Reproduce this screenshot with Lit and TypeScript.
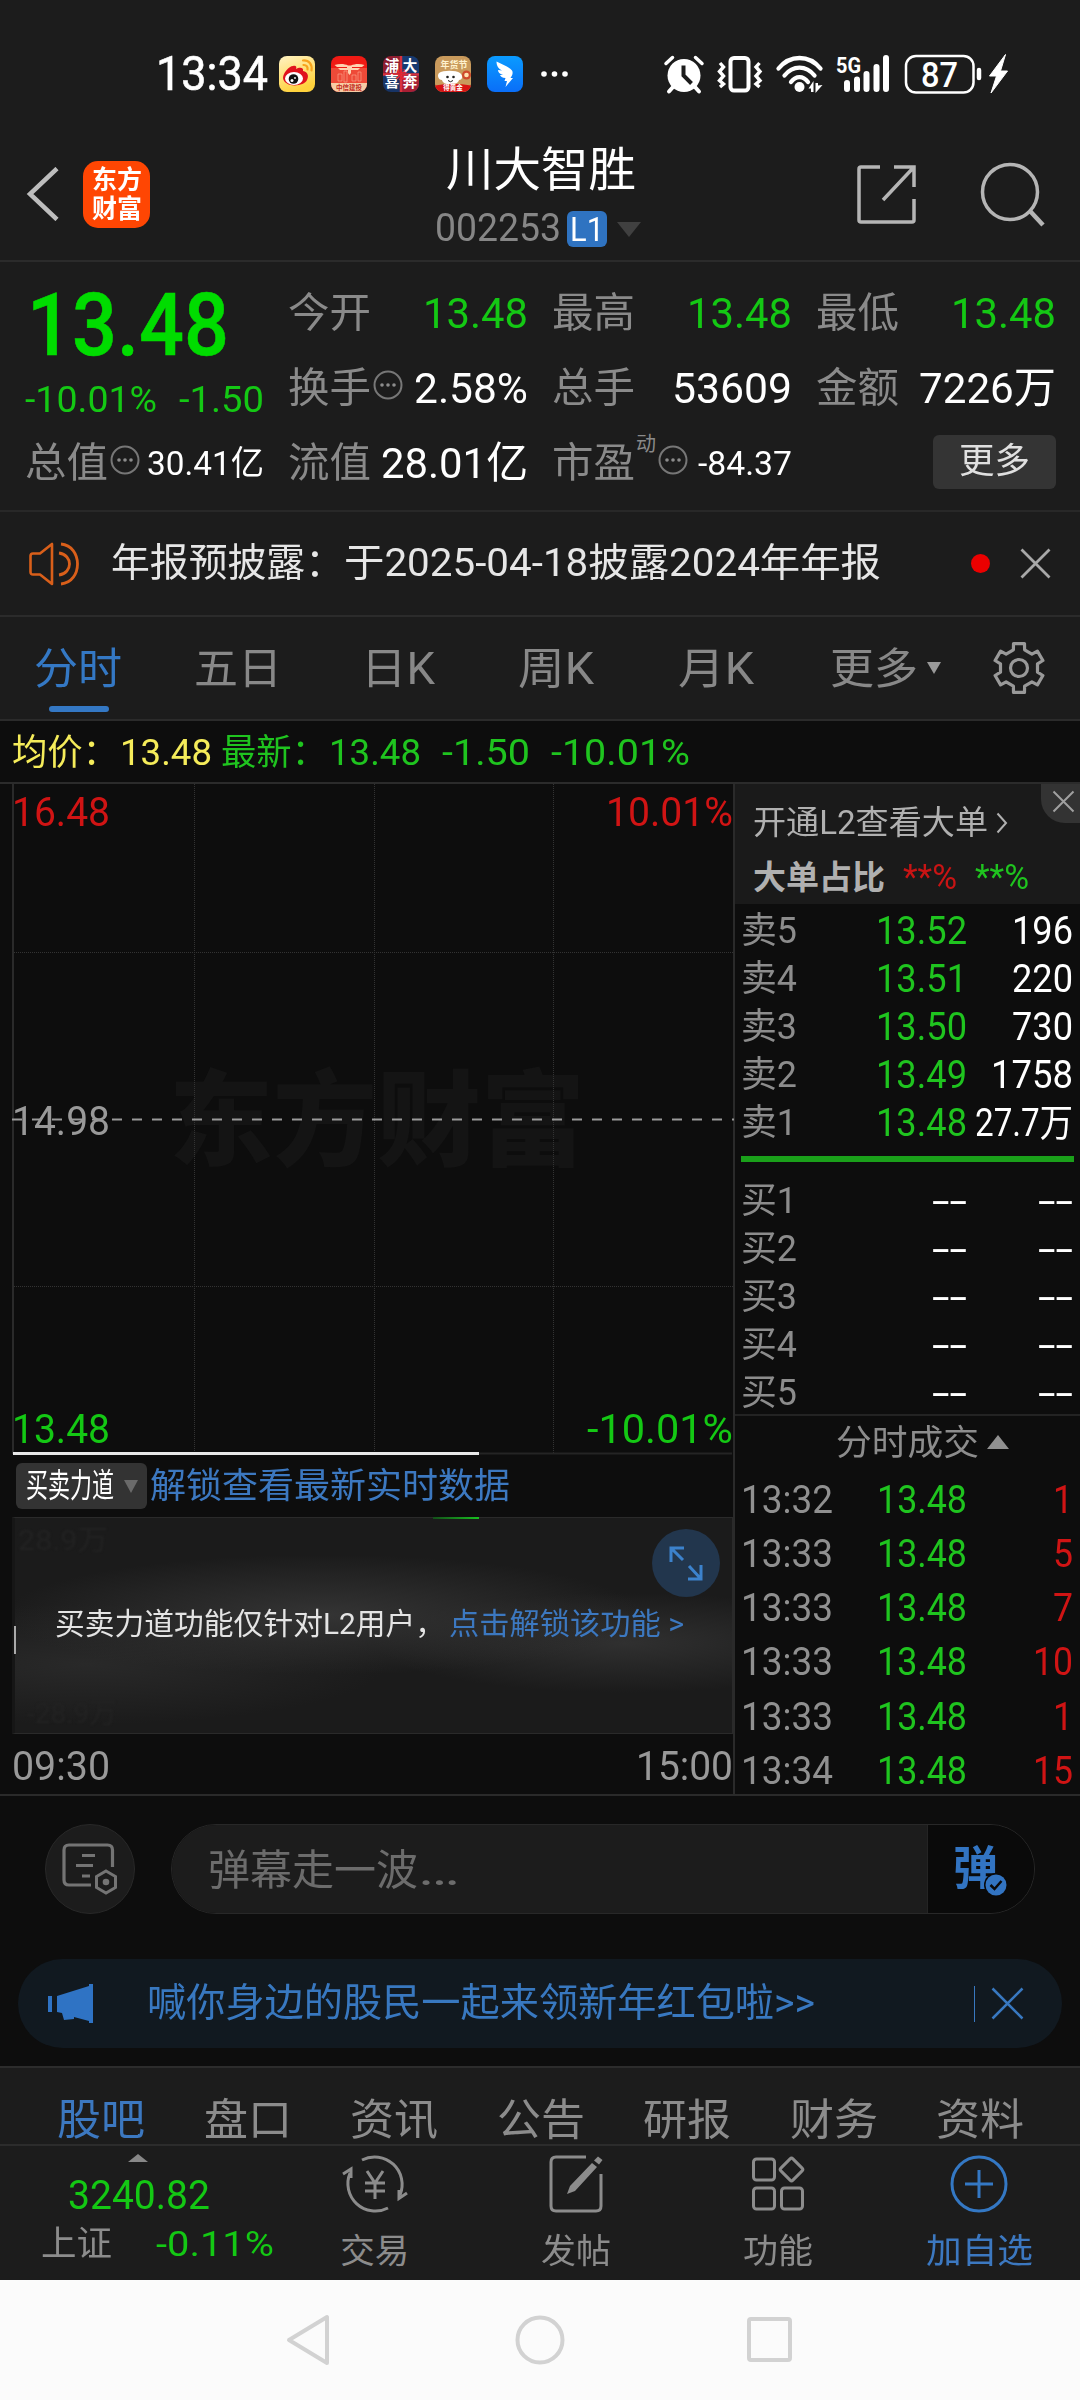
import { LitElement, html, css, svg } from "lit";
import { customElement, property, query } from "lit/decorators.js";

/** Text squeezed or stretched horizontally to an exact advance width. */
@customElement("fit-text")
class FitText extends LitElement {
  @property({ type: Number }) w = 100;
  @query("span") inner!: HTMLElement;
  static styles = css`
    :host { display: block; flex: none; white-space: pre; line-height: 1.2; }
    span { display: inline-block; transform-origin: 0 50%; vertical-align: top; }
  `;
  updated() {
    this.style.width = `${this.w}px`;
    this.inner.style.transform = "none";
    const natural = this.inner.getBoundingClientRect().width;
    if (natural > 0) this.inner.style.transform = `scaleX(${this.w / natural})`;
  }
  render() {
    return html`<span><slot></slot></span>`;
  }
}

const fit = (text: string, w: number, cls = "") => html`<fit-text class=${cls} .w=${w}>${text}</fit-text>`;

const icon = (w: number, h: number, body: unknown, cls = "") =>
  html`<svg class="ic ${cls}" width=${w} height=${h} viewBox="0 0 ${w} ${h}" fill="none">${body}</svg>`;

const more = icon(30, 30, svg`<circle cx="15" cy="15" r="13.5" stroke="#777" stroke-width="2"/>
  <circle cx="9" cy="15" r="1.8" fill="#8c8c8c"/><circle cx="15" cy="15" r="1.8" fill="#8c8c8c"/><circle cx="21" cy="15" r="1.8" fill="#8c8c8c"/>`);

const cross = (s: number, color: string, sw = 2.5, cls = "") =>
  icon(s, s, svg`<path d="M1.5 1.5L${s - 1.5} ${s - 1.5}M${s - 1.5} 1.5L1.5 ${s - 1.5}" stroke=${color} stroke-width=${sw}/>`, cls);

@customElement("status-bar")
class StatusBar extends LitElement {
  static styles = css`
    :host { display: flex; align-items: center; height: 148px; padding: 0 71px 0 156px; box-sizing: border-box; color: #fff; }
    .time { font-size: 48px; font-weight: 400; -webkit-text-stroke: 0.6px #fff; }
    .apps { display: flex; gap: 16px; margin-left: 11px; }
    .ic { display: block; flex: none; overflow: visible; }
    .dots { margin-left: 18px; }
    .sys { display: flex; align-items: center; margin-left: auto; }
    .vib { margin-left: 13px; } .wifi { margin-left: 13px; } .sig { margin-left: 13px; } .bat { margin-left: 13px; } .bolt { margin-left: 7px; }
    text { font-family: Roboto, "Noto Sans CJK SC", sans-serif; font-weight: 700; }
    .lvl { font-weight: 500; }
  `;
  render() {
    return html`
      ${fit("13:34", 112, "time")}
      <div class="apps">
        ${icon(36, 36, svg`<defs><linearGradient id="wb" x1="0" y1="0" x2="0.4" y2="1"><stop stop-color="#fff3c4"/><stop offset="1" stop-color="#ffd23c"/></linearGradient></defs>
          <rect width="36" height="36" rx="8" fill="url(#wb)"/>
          <path d="M4 22C4 17 10 10 14 10C17 9 18 11 17 13C20 11 25 11 24 15C29 16 30 20 28 24C25 31 5 32 4 22Z" fill="#e0121c"/>
          <ellipse cx="15" cy="22.5" rx="9" ry="6.5" fill="#fff"/><circle cx="14.5" cy="23" r="4.8" fill="#111"/><circle cx="13" cy="24.5" r="1.5" fill="#fff"/><circle cx="16" cy="22" r="0.9" fill="#fff"/>
          <path d="M24 4.500C30 4 33.500 8.500 32.500 14.500M24.500 9C27.500 8.800 29 11 28.500 13.500" stroke="#f8a31c" stroke-width="2.200" stroke-linecap="round"/>`)}
        ${icon(36, 36, svg`<rect width="36" height="36" rx="8" fill="#f01a14"/><path d="M0 12H36V28H0Z" fill="#ee4a38"/>
          <path d="M7 18h4v7H7zM13 15h3v11h-3zM21 19h4v6h-4zM27 16h3v9h-3z" stroke="#ffb49a" stroke-width="0.800" opacity="0.700"/>
          <path d="M3.500 9C9 7.500 14 8 17 9.500H20C24 7.500 29 7.500 33.500 9L31 11H21V12H29L27 14H20V17L18.500 19L17 17V14H9L7 12H16V11H6Z" fill="#ffd3b0"/>
          <path d="M0 27H36V28A8 8 0 0 1 28 36H8A8 8 0 0 1 0 28Z" fill="#f7cda6"/>
          <text x="18" y="33.800" font-size="6.500" text-anchor="middle" fill="#c2281c">中信建投</text>`)}
        ${icon(36, 36, svg`<defs><clipPath id="pq"><rect width="36" height="36" rx="8"/></clipPath></defs>
          <g clip-path="url(#pq)"><rect width="18" height="18" fill="#8d1d30"/><rect x="18" width="18" height="36" fill="#163a72"/><rect y="18" width="18" height="18" fill="#173466"/>
          <rect x="18" y="20" width="18" height="16" fill="#a81f34"/><path d="M18 0V36M0 18.500H36" stroke="#d8323e" stroke-width="2.500"/></g>
          <g fill="#fff" font-size="14.500" text-anchor="middle"><text x="9" y="14.500">浦</text><text x="27" y="14.500">大</text><text x="9" y="31">喜</text><text x="27" y="31">奔</text></g>
          <text x="18" y="22.500" font-size="11" text-anchor="middle" fill="#e0242f">发</text>`)}
        ${icon(36, 36, svg`<rect width="36" height="36" rx="8" fill="#c99a5c"/>
          <text x="19" y="12" font-size="9" text-anchor="middle" fill="#fff2cf">年货节</text>
          <circle cx="31.500" cy="19" r="4.500" fill="#cf4a2c"/><circle cx="31.500" cy="19" r="2.300" fill="#ffe1b0"/>
          <path d="M4 17C8 14 21 14 25 17C28 19 28 24 24 24C23 30 8 30 7 24C3 24 2 19 4 17Z" fill="#fff"/>
          <circle cx="12.500" cy="21" r="1.300" fill="#222"/><circle cx="18.500" cy="21" r="1.300" fill="#222"/><path d="M13 24.500Q15.500 27 18 24.500" stroke="#222"/>
          <path d="M0 29.500Q18 26 36 29.500A8 8 0 0 1 28 36H8A8 8 0 0 1 0 29.500Z" fill="#d81414"/>
          <text x="18" y="34" font-size="6.500" text-anchor="middle" fill="#fff">得黄金</text>`)}
        ${icon(36, 36, svg`<defs><linearGradient id="dd" x1="0" y1="0" x2="0" y2="1"><stop stop-color="#0a9bff"/><stop offset="1" stop-color="#0a6ef8"/></linearGradient></defs>
          <rect width="36" height="36" rx="8" fill="url(#dd)"/>
          <path d="M9.500 5.500C14 8 22 10.500 25 14.500C26.500 17 25 20 23.500 22H26L18.500 31L20 25H17.500L18.500 22C15 22 13.500 20.500 13 19L16 19C12.500 18 11 16 11 14L15 14.500C11.500 12.500 9.500 10 9.500 5.500Z" fill="#fff"/>`)}
      </div>
      ${icon(28, 6, svg`<circle cx="3" cy="3" r="2.800" fill="#fff"/><circle cx="13.500" cy="3" r="2.800" fill="#fff"/><circle cx="24" cy="3" r="2.800" fill="#fff"/>`, "dots")}
      <div class="sys">
        ${icon(40, 38, svg`<circle cx="20" cy="20.500" r="16.500" fill="#fff"/><path d="M9 32L5 36.500M31 32L35 36.500" stroke="#fff" stroke-width="4" stroke-linecap="round"/>
          <path d="M2 8.500L8.500 2.500M38 8.500L31.500 2.500" stroke="#fff" stroke-width="3.500" stroke-linecap="round"/><path d="M19.500 10.500V20.500L27.500 28.500" stroke="#1c1c1c" stroke-width="4"/>`)}
        ${icon(46, 38, svg`<rect x="13.500" y="3" width="18" height="32.500" rx="3.500" stroke="#fff" stroke-width="4"/>
          <path d="M3 8L6.500 12L2.500 16.500L6.500 21L2.500 25.500L6.500 29L3 32M42.500 8L39 12L43 16.500L39 21L43 25.500L39 29L42.500 32" stroke="#fff" stroke-width="3.400"/>`, "vib")}
        ${icon(48, 38, svg`<path d="M2.500 13.500C14 -0.500 33 -0.500 44.500 13.500M8.500 20.500C17 10 30 10 38.500 20.500M15 27C20 20.500 27 20.500 32 27" stroke="#fff" stroke-width="4.300" stroke-linecap="round"/>
          <circle cx="23.500" cy="32" r="5" fill="#fff"/><path d="M32.500 33.500L37.500 26V37H35V33.500ZM39.500 28H42V30.500L46.500 30L39.500 38Z" fill="#fff"/>`, "wifi")}
        ${icon(54, 40, svg`<text x="-1" y="19" font-size="22" textLength="25" lengthAdjust="spacingAndGlyphs" fill="#fff">5G</text>
          <path d="M10 29V35M20 25.500V35M29.500 20V35M39.500 13V35M49 4V35" stroke="#fff" stroke-width="6" stroke-linecap="round"/>`, "sig")}
        ${icon(78, 40, svg`<rect x="2" y="2" width="67.500" height="36.500" rx="10" stroke="#fff" stroke-width="2.500"/><path d="M75 16V24" stroke="#fff" stroke-width="4.500" stroke-linecap="round"/>
          <text class="lvl" x="17" y="32.500" font-size="34.500" textLength="37" lengthAdjust="spacingAndGlyphs" fill="#fff">87</text>`, "bat")}
        ${icon(20, 40, svg`<path d="M16.500 0.500L0.500 22H7.500L2 39L18.500 17H11.500Z" fill="#fff" stroke="#fff"/>`, "bolt")}
      </div>`;
  }
}

@customElement("title-bar")
class TitleBar extends LitElement {
  static styles = css`
    :host { display: flex; align-items: flex-start; height: 114px; box-sizing: border-box; border-bottom: 2px solid #2b2b2b; padding: 0 34px 0 26px; }
    .ic { display: block; flex: none; }
    .back { margin-top: 19px; }
    .logo { width: 67px; height: 67px; border-radius: 15px; background: #ff4603; color: #fff; margin: 13px 0 0 23px; display: flex; flex-direction: column; justify-content: center; gap: 3px; align-items: center; font-weight: 700; font-size: 26px; }
    .logo fit-text { line-height: 26px; }
    .mid { flex: 1; display: flex; flex-direction: column; margin-left: 285px; }
    .name { font-size: 47px; color: #fff; line-height: 50px; margin: -3px 0 0 11px; }
    .sub { display: flex; align-items: center; margin-top: 16px; height: 36px; color: #868686; }
    .code { font-size: 38px; }
    .lv { width: 40px; height: 36px; border-radius: 6px; background: #2f73c1; color: #fff; font-size: 34px; display: flex; justify-content: center; align-items: center; margin: 0 10px 0 6px; }
    .share { margin: 16px 63px 0 0; } .search { margin-top: 14px; }
  `;
  render() {
    return html`
      ${icon(34, 54, svg`<path d="M31 1.500L4 27L31 52.500" stroke="#bdbdbd" stroke-width="4.500"/>`, "back")}
      <div class="logo">${fit("东方", 50)}${fit("财富", 50)}</div>
      <div class="mid">
        ${fit("川大智胜", 190, "name")}
        <div class="sub">${fit("002253", 126, "code")}<div class="lv">${fit("L1", 34)}</div>${icon(24, 15, svg`<path d="M0 0H24L12 15Z" fill="#404040"/>`)}</div>
      </div>
      ${icon(60, 60, svg`<path d="M23 3H4Q2 3 2 5V56Q2 58 4 58H55Q57 58 57 56V35M37 3H57V23M57 3L26 36" stroke="#b5b5b5" stroke-width="3.500"/>`, "share")}
      ${icon(66, 66, svg`<circle cx="30" cy="30" r="27.500" stroke="#b5b5b5" stroke-width="3.500"/><path d="M50 49L63 63" stroke="#b5b5b5" stroke-width="4.500"/>`, "search")}`;
  }
}

@customElement("quote-panel")
class QuotePanel extends LitElement {
  static styles = css`
    :host { display: grid; grid-template-columns: 239px 240px 240px 240px; grid-template-rows: 75px 75px 75px; column-gap: 24px; height: 250px; box-sizing: border-box; padding: 14px 24px 0 25px; border-bottom: 2px solid #282828; color: #fff; font-size: 43px; }
    .ic { display: block; flex: none; }
    .lead { grid-row: 1 / 3; display: flex; flex-direction: column; }
    .price { font-size: 88px; font-weight: 500; color: #00dc00; line-height: 94px; margin: 2px 0 0 2px; -webkit-text-stroke: 0.6px #00dc00; }
    .chg { display: flex; justify-content: space-between; color: #14c814; font-size: 37px; margin-top: 6px; }
    .chg fit-text { line-height: 44px; }
    .cell { display: flex; align-items: center; justify-content: space-between; }
    .cell .ic { margin: -8px auto 0 2px; }
    .lab { color: #8a8a8a; font-size: 41px; }
    .g { color: #14c814; }
    .s { font-size: 34px; }
    .dyn { color: #8a8a8a; font-size: 20px; align-self: flex-start; margin: 6px 0 0 1px; }
    .btn { width: 123px; height: 54px; border-radius: 6px; background: #343434; color: #e0e0e0; font-size: 35px; display: flex; align-items: center; justify-content: center; justify-self: end; align-self: center; margin-top: -4px; }
  `;
  render() {
    const cell = (l: string, v: string, w: number, c = "", i: unknown = "") =>
      html`<div class="cell">${fit(l, 83, "lab")}${i}${fit(v, w, c)}</div>`;
    return html`
      <div class="lead">${fit("13.48", 202, "price")}<div class="chg">${fit("-10.01%", 132)}${fit("-1.50", 85)}</div></div>
      ${cell("今开", "13.48", 105, "g")}${cell("最高", "13.48", 105, "g")}${cell("最低", "13.48", 105, "g")}
      ${cell("换手", "2.58%", 114, "", more)}${cell("总手", "53609", 120)}${cell("金额", "7226万", 137)}
      ${cell("总值", "30.41亿", 117, "s", more)}${cell("流值", "28.01亿", 147)}
      ${cell("市盈", "-84.37", 94, "s", html`${fit("动", 20, "dyn")}${more}`)}
      <div class="btn">${fit("更多", 71)}</div>`;
  }
}

@customElement("notice-row")
class NoticeRow extends LitElement {
  static styles = css`
    :host { display: flex; align-items: center; height: 105px; box-sizing: border-box; padding: 0 29px; border-bottom: 2px solid #2b2b2b; font-size: 39px; color: #e6e6e6; }
    .ic { display: block; flex: none; }
    .first { margin-left: 30px; }
    .dot { width: 19px; height: 19px; border-radius: 50%; background: #eb0000; margin: 0 30px 0 auto; }
  `;
  render() {
    return html`${icon(52, 44, svg`<path d="M23 2V42L11 32.500H4Q1.500 32.500 1.500 30V14Q1.500 11.500 4 11.500H11Z" stroke="#d95f1a" stroke-width="2.600" stroke-linejoin="round"/>
      <path d="M32 2C54 4 54 40 32 42M30 11C44 13 44 31 30 33" stroke="#d95f1a" stroke-width="2.800"/>`)}
      ${fit("年报预披露：", 233, "first")}${fit("于2025-04-18披露2024年年报", 537)}
      <div class="dot"></div>${cross(31, "#a8a8a8", 2.8)}`;
  }
}

@customElement("period-tabs")
class PeriodTabs extends LitElement {
  static styles = css`
    :host { display: flex; align-items: center; height: 104px; box-sizing: border-box; padding: 0 34px; border-bottom: 2px solid #2b2b2b; font-size: 43.5px; color: #888; }
    .ic { display: block; flex: none; }
    .tab { position: relative; padding-top: 4px; }
    .on { color: #3478c4; }
    .on i { position: absolute; left: 15px; bottom: -16px; width: 60px; height: 6px; border-radius: 3px; background: #3478c4; }
    .t2 { margin-left: 72px; } .t3 { margin-left: 79px; } .t4 { margin-left: 83px; } .t5 { margin-left: 84px; } .t6 { margin-left: 76px; }
    .tri { margin-left: 9px; } .gear { margin-left: auto; }
  `;
  render() {
    const gear: string[] = [];
    for (let k = 0; k < 6; k++) {
      const a = (k * Math.PI) / 3 - Math.PI / 2;
      for (const [d, r] of [[-0.3, 19], [-0.22, 25], [0.22, 25], [0.3, 19]]) gear.push(`${(27 + r * Math.cos(a + d)).toFixed(1)} ${(27 + r * Math.sin(a + d)).toFixed(1)}`);
    }
    return html`
      <div class="tab on">${fit("分时", 88)}<i></i></div>
      <div class="tab t2">${fit("五日", 88)}</div><div class="tab t3">${fit("日K", 74)}</div>
      <div class="tab t4">${fit("周K", 76)}</div><div class="tab t5">${fit("月K", 76)}</div>
      <div class="tab t6">${fit("更多", 88)}</div>${icon(14, 12, svg`<path d="M0 0H14L7 12Z" fill="#999"/>`, "tri")}
      ${icon(54, 54, svg`<path d="M${gear.join("L")}Z" stroke="#999" stroke-width="3.200" stroke-linejoin="round"/><circle cx="27" cy="27" r="8.500" stroke="#999" stroke-width="3.200"/>`, "gear")}`;
  }
}

@customElement("price-chart")
class PriceChart extends LitElement {
  static styles = css`
    :host { display: block; width: 735px; border-right: 2px solid #2a2a2a; box-sizing: border-box; }
    .ic { display: block; flex: none; }
    .plot { position: relative; height: 671px; margin-left: 12px; display: flex; flex-direction: column; justify-content: space-between; font-size: 40px; box-sizing: border-box; padding: 5px 0 1px 0; }
    .grid { position: absolute; left: 0; top: 0; }
    .wm { position: absolute; left: 157px; top: 267px; font-size: 104px; font-weight: 900; font-family: "Noto Sans CJK SC", sans-serif; color: #141414; }
    .row { position: relative; display: flex; justify-content: space-between; }
    .r { color: #d01414; } .g { color: #14c814; } .n { color: #999; }
    .bar { display: flex; align-items: center; height: 62px; margin-left: 16px; font-size: 35.5px; color: #3c78c0; }
    .sel { width: 131px; height: 46px; border-radius: 6px; background: #333; display: flex; align-items: center; justify-content: space-between; box-sizing: border-box; padding: 0 9px 0 10px; color: #fff; font-size: 33px; margin-right: 3px; }
    .lock { position: relative; height: 217px; margin-left: 12px; box-sizing: border-box; border: 1px solid #2a2a2a; border-left: 3px solid #161616; background: radial-gradient(ellipse 320px 60px at 43% 45%, #343434, transparent), radial-gradient(ellipse 250px 50px at 85% 58%, #303030, transparent), radial-gradient(ellipse 300px 60px at 10% 68%, #292929, transparent), #1b1b1b; display: flex; align-items: center; font-size: 30px; color: #e4e4e4; padding: 0 0 3px 40px; }
    .link { color: #3c78c0; margin-left: 4px; }
    .open { position: absolute; right: 12px; top: 11px; width: 68px; height: 68px; border-radius: 50%; background: #22364d; display: flex; align-items: center; justify-content: center; }
    .trace { position: absolute; left: 418px; top: -1px; width: 46px; height: 2px; background: linear-gradient(90deg, #14501a, #18c020); }
    .ghost { position: absolute; left: 3px; font-size: 28px; color: #222; filter: blur(1px); }
    .g1 { top: 6px; } .g2 { bottom: 2px; left: 12px; }
    .tick { position: absolute; left: -1px; top: 108px; width: 2px; height: 28px; background: #aaa; }
    .time { display: flex; justify-content: space-between; align-items: center; height: 61px; margin-left: 12px; color: #999; font-size: 40px; }
    .time fit-text { margin-top: 4px; }
  `;
  render() {
    return html`
      <div class="plot">
        <div class="wm">${fit("东方财富", 416)}</div>
        <svg class="ic grid" width="722" height="672" viewBox="0 0 722 672" fill="none">
          <path d="M182.500 0V670M362.500 0V670M541.500 0V670M0 168.500H722M0 502.500H722" stroke="#333" stroke-dasharray="1 1"/>
          <path d="M1 0V670" stroke="#2a2a2a" stroke-width="2"/><path d="M466 669.500H720" stroke="#242424" stroke-width="2"/>
          <path d="M0 335.500H722" stroke="#9a9a9a" stroke-width="2" stroke-dasharray="10 10"/>
          <path d="M1 669.500H467" stroke="#e8e8e8" stroke-width="3"/>
        </svg>
        <div class="row r">${fit("16.48", 98)}${fit("10.01%", 127)}</div>
        <div class="row n">${fit("14.98", 98)}</div>
        <div class="row g">${fit("13.48", 98)}${fit("-10.01%", 146)}</div>
      </div>
      <div class="bar"><div class="sel">${fit("买卖力道", 88)}${icon(14, 13, svg`<path d="M0 0H14L7 13Z" fill="#6a6a6a"/>`)}</div>${fit("解锁查看最新实时数据", 360)}</div>
      <div class="lock">
        <div class="ghost g1">${fit("28.9万", 90)}</div><div class="ghost g2">${fit("-28.9万", 90)}</div>
        <div class="trace"></div><div class="tick"></div>
        ${fit("买卖力道功能仅针对L2用户，", 390)}${fit("点击解锁该功能 >", 235, "link")}
        <div class="open">${icon(36, 36, svg`<path d="M3 17V3H16M3 3L15 15M33 20V34H20M33 34L21 21" stroke="#3c82cc" stroke-width="3"/>`)}</div>
      </div>
      <div class="time">${fit("09:30", 98)}${fit("15:00", 97)}</div>`;
  }
}

const ASKS: [string, string, string, number][] = [["卖5", "13.52", "196", 61], ["卖4", "13.51", "220", 61], ["卖3", "13.50", "730", 61], ["卖2", "13.49", "1758", 82], ["卖1", "13.48", "27.7万", 98]];
const TRADES: [string, string, number][] = [["13:32", "1", 20], ["13:33", "5", 20], ["13:33", "7", 20], ["13:33", "10", 40], ["13:33", "1", 20], ["13:34", "15", 40]];

@customElement("order-book")
class OrderBook extends LitElement {
  static styles = css`
    :host { display: block; flex: 1; color: #fff; font-size: 38px; }
    .ic { display: block; flex: none; }
    .head { position: relative; height: 120px; background: #1a1a1a; box-sizing: border-box; padding: 12px 0 0 18px; color: #b0b0b0; }
    .l { display: flex; align-items: center; height: 54px; }
    .l2 { font-size: 33px; gap: 18px; padding-top: 1px; }
    .l2 .r, .l2 .g { font-size: 35px; }
    .b { font-weight: 700; }
    .l1 { font-size: 32.500px; gap: 8px; }
    .close { position: absolute; right: 0; top: 0; width: 39px; height: 39px; border-radius: 0 0 0 24px; background: #333; display: flex; align-items: center; justify-content: center; box-sizing: border-box; padding: 0 0 5px 6px; }
    .row { display: grid; grid-template-columns: 118px 108px 1fr; align-items: center; height: 48px; padding: 3px 7px 0 6px; box-sizing: border-box; }
    .row > :nth-child(2), .row > :nth-child(3) { justify-self: end; }
    .asks { padding-top: 2px; }
    .lab { color: #8c8c8c; font-size: 36px; }
    .g { color: #1fc41f; } .r { color: #c81414; } .rr { color: #d01414; }
    .bar { height: 6px; background: #1aa01a; margin: 10px 6px 14px 6px; }
    .bids { height: 238px; border-bottom: 2px solid #232323; }
    .th { display: flex; align-items: center; justify-content: center; gap: 8px; height: 57px; color: #8c8c8c; font-size: 35.500px; padding: 0 0 2px 30px; box-sizing: border-box; }
    .th .ic { margin-top: -4px; }
    .tr { height: 54.200px; padding-top: 1px; }
    .t { color: #909090; }
  `;
  render() {
    return html`
      <div class="head">
        <div class="l l1">${fit("开通L2查看大单", 235)}${icon(12, 22, svg`<path d="M1.500 1.500L10 11L1.500 20.500" stroke="#b0b0b0" stroke-width="2"/>`)}</div>
        <div class="l l2">${fit("大单占比", 132, "b")}${fit("**%", 54, "r")}${fit("**%", 54, "g")}</div>
        <div class="close">${cross(23, "#a0a0a0", 2)}</div>
      </div>
      <div class="asks">${ASKS.map(([n, p, v, w]) => html`<div class="row">${fit(n, 56, "lab")}${fit(p, 91, "g")}${fit(v, w)}</div>`)}</div>
      <div class="bar"></div>
      <div class="bids">${[1, 2, 3, 4, 5].map((i) => html`<div class="row">${fit("买" + i, 56, "lab")}${fit("--", 35)}${fit("--", 35)}</div>`)}</div>
      <div class="th">${fit("分时成交", 143)}${icon(22, 14, svg`<path d="M11 0L22 14H0Z" fill="#909090"/>`)}</div>
      ${TRADES.map(([t, v, w]) => html`<div class="row tr">${fit(t, 92, "t")}${fit("13.48", 90, "g")}${fit(v, w, "rr")}</div>`)}`;
  }
}

@customElement("danmu-bar")
class DanmuBar extends LitElement {
  static styles = css`
    :host { display: block; padding: 28px 18px 0; box-sizing: border-box; height: 272px; border-top: 2px solid #2a2a2a; }
    .ic { display: block; flex: none; }
    .line { display: flex; gap: 36px; padding: 0 27px; }
    .set { width: 90px; height: 90px; border-radius: 50%; background: #1c1c1c; border: 1px solid #282828; box-sizing: border-box; display: flex; align-items: center; justify-content: center; }
    .input { flex: 1; height: 90px; border-radius: 45px; border: 1px solid #282828; box-sizing: border-box; overflow: hidden; display: flex; }
    .ph { flex: 1; background: #1c1c1c; display: flex; align-items: center; padding: 4px 0 0 36px; color: #6c6c6c; font-size: 42px; }
    .tog { position: relative; width: 107px; background: #0a0a0a; border-left: 1px solid #242424; box-sizing: border-box; color: #3274c2; font-size: 46px; font-weight: 700; display: flex; align-items: center; padding-left: 25px; }
    .ok { position: absolute; left: 56px; top: 48px; }
    .banner { display: flex; align-items: center; height: 89px; border-radius: 45px; background: #111920; margin-top: 45px; padding: 0 38px 0 30px; box-sizing: border-box; color: #3878c0; font-size: 39px; }
    .banner fit-text { margin-left: 53px; }
    .sep { width: 1px; height: 36px; background: #3878c0; margin: 0 16px 0 auto; }
  `;
  render() {
    return html`
      <div class="line">
        <div class="set">${icon(56, 52, svg`<path d="M50.500 24V7Q50.500 2 45.500 2H7Q2 2 2 7V37Q2 42 7 42H29M20 12.500H33M14 22.500H31M20 33H28" stroke="#747474" stroke-width="3.200"/>
          <path d="M44 28L53.500 33.500V44.500L44 50L34.500 44.500V33.500Z" stroke="#747474" stroke-width="3"/><circle cx="44" cy="39" r="3.300" fill="#747474"/>`)}</div>
        <div class="input"><div class="ph">${fit("弹幕走一波", 210)}${fit("…", 42)}</div>
          <div class="tog">${fit("弹", 45)}<div class="ok">${icon(24, 24, svg`<circle cx="12" cy="12" r="12" fill="#0a0a0a"/><circle cx="12" cy="12" r="10.500" fill="#3274c2"/><path d="M6.500 12L10.500 16L17.500 8" stroke="#0a0a0a" stroke-width="2.500"/>`)}</div></div></div>
      </div>
      <div class="banner">${icon(46, 40, svg`<path d="M0 12H4V28H0ZM9 12L41 2V0H45V39H41V37L26 33V35L16 36L14 29L9 28Z" fill="#2f73c4"/>`)}
        ${fit("喊你身边的股民一起来领新年红包啦>>", 668)}<div class="sep"></div>${cross(33, "#3878c0", 2.5)}</div>`;
  }
}

@customElement("bottom-area")
class BottomArea extends LitElement {
  static styles = css`
    :host { display: block; background: #1c1c1c; border-top: 2px solid #2c2c2c; color: #8c8c8c; }
    .ic { display: block; flex: none; }
    .tabs { display: flex; justify-content: space-between; height: 78px; box-sizing: border-box; padding: 27px 56px 0 57px; font-size: 43.500px; border-bottom: 2px solid #2c2c2c; }
    .tabs fit-text { height: 49px; line-height: 52px; }
    .on { color: #3c78c0; }
    .bar { display: flex; height: 134px; }
    .idx { width: 274px; flex: none; display: flex; flex-direction: column; align-items: center; padding-top: 8px; box-sizing: border-box; }
    .tri { margin-left: 2px; }
    .num { color: #14c814; font-size: 40px; margin-top: 10px; margin-left: 4px; }
    .ln { display: flex; gap: 44px; padding-left: 41px; align-self: flex-start; font-size: 35.500px; margin-top: 3px; }
    .g { color: #14c814; }
    .item { width: 201.500px; display: flex; flex-direction: column; align-items: center; padding-top: 8px; box-sizing: border-box; gap: 17px; font-size: 34.500px; }
    .nav { display: flex; align-items: center; height: 120px; background: #fbfbfb; padding-left: 286px; }
    .n2 { margin: 0 182px 0 185px; }
  `;
  render() {
    const c = "#8c8c8c";
    return html`
      <div class="tabs">${["股吧", "盘口", "资讯", "公告", "研报", "财务", "资料"].map((t, i) => fit(t, 88, i ? "" : "on"))}</div>
      <div class="bar">
        <div class="idx">${icon(20, 8, svg`<path d="M10 0L20 8H0Z" fill="#888"/>`, "tri")}${fit("3240.82", 142, "num")}
          <div class="ln">${fit("上证", 71)}${fit("-0.11%", 118, "g")}</div></div>
        <div class="item">${icon(66, 60, svg`<path d="M20 6A27.500 27.500 0 0 1 58 41M46 54A27.500 27.500 0 0 1 8 19M1 20L9 15V24M65 39L57 44.500V36" stroke=${c} stroke-width="3"/>
          <path d="M25 17L33 29L41 17M23 29H43M23 37H43M33 29V45" stroke=${c} stroke-width="3"/>`)}${fit("交易", 69)}</div>
        <div class="item">${icon(56, 60, svg`<path d="M38 3H8Q3 3 3 8V52Q3 57 8 57H48Q53 57 53 52V20" stroke=${c} stroke-width="3"/><path d="M44 9L49 13L27 37L19 40L22 32ZM46 6.500L50 2.500L54.500 6L51 10.500Z" fill=${c}/>`)}${fit("发帖", 70)}</div>
        <div class="item">${icon(54, 60, svg`<rect x="2.500" y="5" width="21" height="21" rx="3" stroke=${c} stroke-width="3"/><rect x="2.500" y="34" width="21" height="21" rx="3" stroke=${c} stroke-width="3"/>
          <rect x="30.500" y="34" width="21" height="21" rx="3" stroke=${c} stroke-width="3"/><rect x="32" y="7" width="17" height="17" rx="2" transform="rotate(45 40.500 15.500)" stroke=${c} stroke-width="3"/>`)}${fit("功能", 70)}</div>
        <div class="item on">${icon(58, 60, svg`<circle cx="29" cy="30" r="27" stroke="#3478c4" stroke-width="3"/><path d="M15 30H43M29 16V44" stroke="#3478c4" stroke-width="3"/>`)}${fit("加自选", 107)}</div>
      </div>
      <div class="nav">
        ${icon(44, 52, svg`<path d="M41 3V49L3 26Z" stroke="#d2d2d2" stroke-width="4" stroke-linejoin="round"/>`)}
        ${icon(50, 50, svg`<circle cx="25" cy="25" r="22.500" stroke="#d2d2d2" stroke-width="4"/>`, "n2")}
        ${icon(46, 46, svg`<rect x="2" y="2" width="41" height="41" rx="2" stroke="#d2d2d2" stroke-width="4"/>`)}
      </div>`;
  }
}

@customElement("app-root")
class AppRoot extends LitElement {
  static styles = css`
    :host { display: block; width: 1080px; height: 2400px; overflow: hidden; background: #0d0d0d; font-family: Roboto, "Noto Sans CJK SC", sans-serif; }
    .top { background: #1c1c1c; }
    .info { display: flex; align-items: center; height: 63px; box-sizing: border-box; border-bottom: 2px solid #2b2b2b; padding: 4px 0 0 12px; font-size: 36px; color: #1fc41f; }
    .y { color: #f5ec5a; }
    .a { margin-left: 2px; } .b { margin-left: 9px; } .c { margin-left: 21px; }
    .main { display: flex; height: 1010px; }
  `;
  render() {
    return html`
      <div class="top">
        <status-bar></status-bar><title-bar></title-bar><quote-panel></quote-panel><notice-row></notice-row><period-tabs></period-tabs>
      </div>
      <div class="info">${fit("均价：", 106, "y")}${fit("13.48", 92, "y a")}${fit("最新：", 106, "b")}${fit("13.48", 92, "a")}${fit("-1.50", 88, "c")}${fit("-10.01%", 139, "c")}</div>
      <div class="main"><price-chart></price-chart><order-book></order-book></div>
      <danmu-bar></danmu-bar>
      <bottom-area></bottom-area>`;
  }
}
